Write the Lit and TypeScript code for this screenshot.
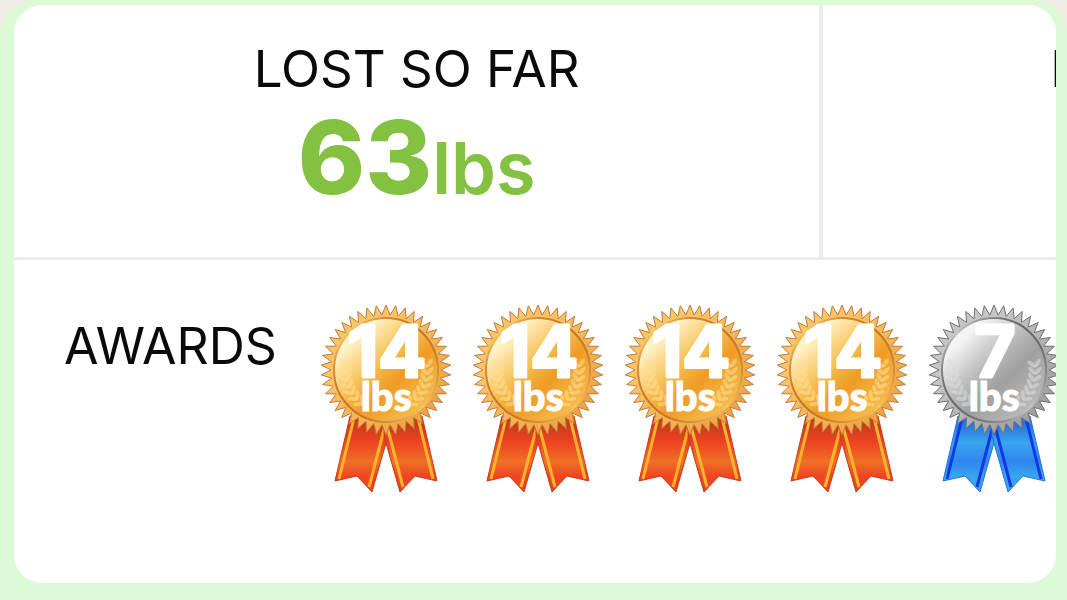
import { LitElement, html, css, svg } from "lit";
import { customElement, property } from "lit/decorators.js";

const CX = 77;
const CY = 70;

// zigzag edge of the rosette
function rosette(teeth: number, outer: number, inner: number) {
  const points: string[] = [];
  for (let i = 0; i < teeth * 2; i++) {
    const r = i % 2 ? inner : outer;
    const a = (Math.PI * i) / teeth;
    points.push(`${(CX + r * Math.sin(a)).toFixed(1)},${(CY - r * Math.cos(a)).toFixed(1)}`);
  }
  return points.join(" ");
}

const EDGE = rosette(42, 65, 55);
const LEAVES = [-9, 1, 11, 21, 31, 41, 51];

@customElement("award-medal")
export class AwardMedal extends LitElement {
  static styles = css`
    :host {
      display: block;
      flex: none;
      width: 152px;
      height: 200px;
    }
    svg {
      display: block;
      width: 100%;
      height: 100%;
    }
    .gold {
      --light: #fff3c8;
      --mid: #f5bb4c;
      --deep: #ee9c26;
      --rim: #fbc566;
      --rim-dark: #ea9a34;
      --edge: #c07a40;
      --ring: #c06a1a;
      --leaf: #ffdf90;
      --ribbon: #ee4422;
      --ribbon-light: #ee7024;
      --ribbon-dark: #c93a18;
      --stripe: #fdb32c;
    }
    .silver {
      --light: #f4f4f4;
      --mid: #b8b8b8;
      --deep: #a0a0a0;
      --rim: #c6c6c6;
      --rim-dark: #929292;
      --edge: #707070;
      --ring: #5c5c5c;
      --leaf: #dcdcdc;
      --ribbon: #38a5ee;
      --ribbon-light: #2f86f0;
      --ribbon-dark: #2374e0;
      --stripe: #1238e4;
    }
    .stop-light { stop-color: var(--light); }
    .stop-mid { stop-color: var(--mid); }
    .stop-deep { stop-color: var(--deep); }
    .stop-rim { stop-color: var(--rim); }
    .stop-rim-dark { stop-color: var(--rim-dark); }
    .stop-ring { stop-color: var(--ring); }
    .stop-ribbon { stop-color: var(--ribbon); }
    .stop-ribbon-light { stop-color: var(--ribbon-light); }
    .stop-ribbon-dark { stop-color: var(--ribbon-dark); }
    .ribbon {
      fill: url(#ribbon);
      stroke: var(--ribbon-dark);
      stroke-width: 1;
    }
    .stripe {
      fill: none;
      stroke: var(--stripe);
      stroke-width: 3;
    }
    .edge {
      fill: url(#rim);
      stroke: var(--edge);
      stroke-width: 1;
    }
    .disc {
      fill: url(#face);
    }
    .ring {
      fill: none;
      stroke: url(#ring);
      stroke-width: 2;
    }
    .leaf {
      fill: var(--leaf);
      opacity: 0.55;
    }
    text {
      fill: #fff;
      stroke: #fff;
      stroke-linejoin: round;
      text-anchor: middle;
    }
    .number {
      font: 700 71px Inter, sans-serif;
      stroke-width: 3;
    }
    .unit {
      font: 900 40px Lato, sans-serif;
      stroke-width: 1;
    }
  `;

  @property() amount = "";
  @property() tone = "gold";

  ribbon() {
    return svg`
      <path class="ribbon" d="M41 116 L26 181 L48 176 L63 192 L79 136 L79 116 Z" />
      <path class="stripe" d="M45 118 L30 179" />
      <path class="stripe" d="M76 126 L60 187" />
    `;
  }

  laurel() {
    return LEAVES.map((a) => svg`
      <g transform="rotate(${-a} ${CX} ${CY})">
        <ellipse class="leaf" cx="33" cy="70" rx="5" ry="2" transform="rotate(48 33 70)" />
        <ellipse class="leaf" cx="39" cy="70" rx="5" ry="2" transform="rotate(-48 39 70)" />
      </g>
    `);
  }

  render() {
    return html`
      <svg class=${this.tone} viewBox="0 0 152 200" role="img" aria-label="${this.amount} lbs">
        <defs>
          <linearGradient id="face" x1="0.1" y1="0.15" x2="0.8" y2="0.9">
            <stop class="stop-light" offset="0.1" />
            <stop class="stop-mid" offset="0.45" />
            <stop class="stop-deep" offset="0.65" />
            <stop class="stop-mid" offset="1" />
          </linearGradient>
          <linearGradient id="rim" x1="0" y1="0" x2="1" y2="1">
            <stop class="stop-rim" offset="0.3" />
            <stop class="stop-rim-dark" offset="1" />
          </linearGradient>
          <linearGradient id="ring" x1="0" y1="1" x2="1" y2="0">
            <stop class="stop-ring" offset="0.1" />
            <stop class="stop-rim" offset="0.5" />
            <stop class="stop-ring" offset="0.9" />
          </linearGradient>
          <linearGradient id="ribbon" x1="0" y1="0" x2="0" y2="1">
            <stop class="stop-ribbon-dark" offset="0.1" />
            <stop class="stop-ribbon" offset="0.35" />
            <stop class="stop-ribbon-light" offset="0.6" />
            <stop class="stop-ribbon" offset="0.8" />
          </linearGradient>
        </defs>
        ${this.ribbon()}
        <g transform="translate(154 0) scale(-1 1)">${this.ribbon()}</g>
        <polygon class="edge" points=${EDGE} />
        <circle class="disc" cx=${CX} cy=${CY} r="52" />
        <circle class="ring" cx=${CX} cy=${CY} r="52" />
        ${this.laurel()}
        <g transform="translate(154 0) scale(-1 1)">${this.laurel()}</g>
        <text class="number" x="78" y="77">${this.amount}</text>
        <text class="unit" x="77" y="111">lbs</text>
      </svg>
    `;
  }
}

@customElement("app-root")
export class AppRoot extends LitElement {
  static styles = css`
    :host {
      display: block;
      background: #f1ebe6;
      font-family: Inter, sans-serif;
      color: #0a0a0a;
    }
    .bubble {
      box-sizing: border-box;
      display: flex;
      min-height: 100vh;
      padding: 5px 11px 17px 14px;
      background: #dcfad5;
      border-radius: 36px 36px 0 0;
    }
    .card {
      flex: 1;
      min-width: 0;
      overflow: hidden;
      background: #fff;
      border-radius: 28px;
    }
    .stats {
      display: grid;
      grid-template-columns: minmax(0, 17fr) minmax(0, 5fr);
      border-bottom: 3px solid #ededed;
    }
    .stat {
      padding: 34px 0 31px;
      text-align: center;
      white-space: nowrap;
    }
    .stat + .stat {
      padding-left: 227px;
      text-align: left;
      border-left: 4px solid #ededed;
    }
    h2 {
      margin: 0;
      font-size: 50px;
      font-weight: 400;
      line-height: 60px;
    }
    .stat h2 {
      font-size: 51px;
    }
    .value {
      margin: 0;
      color: #84c041;
      font-size: 102px;
      font-weight: 800;
      line-height: 116px;
    }
    .value span {
      font-size: 72px;
      font-weight: 600;
    }
    .awards {
      display: flex;
      gap: 32px;
      padding: 40px 0 0 50px;
    }
    .awards h2 {
      flex: none;
      margin-top: 16px;
    }
    .medals {
      display: flex;
    }
  `;

  medals = [
    { amount: "14", tone: "gold" },
    { amount: "14", tone: "gold" },
    { amount: "14", tone: "gold" },
    { amount: "14", tone: "gold" },
    { amount: "7", tone: "silver" },
  ];

  render() {
    return html`
      <main class="bubble">
        <div class="card">
          <section class="stats">
            <div class="stat">
              <h2>LOST SO FAR</h2>
              <p class="value">63<span>lbs</span></p>
            </div>
            <div class="stat">
              <h2>L</h2>
            </div>
          </section>
          <section class="awards">
            <h2>AWARDS</h2>
            <div class="medals">
              ${this.medals.map((m) => html`
                <award-medal amount=${m.amount} tone=${m.tone}></award-medal>
              `)}
            </div>
          </section>
        </div>
      </main>
    `;
  }
}
